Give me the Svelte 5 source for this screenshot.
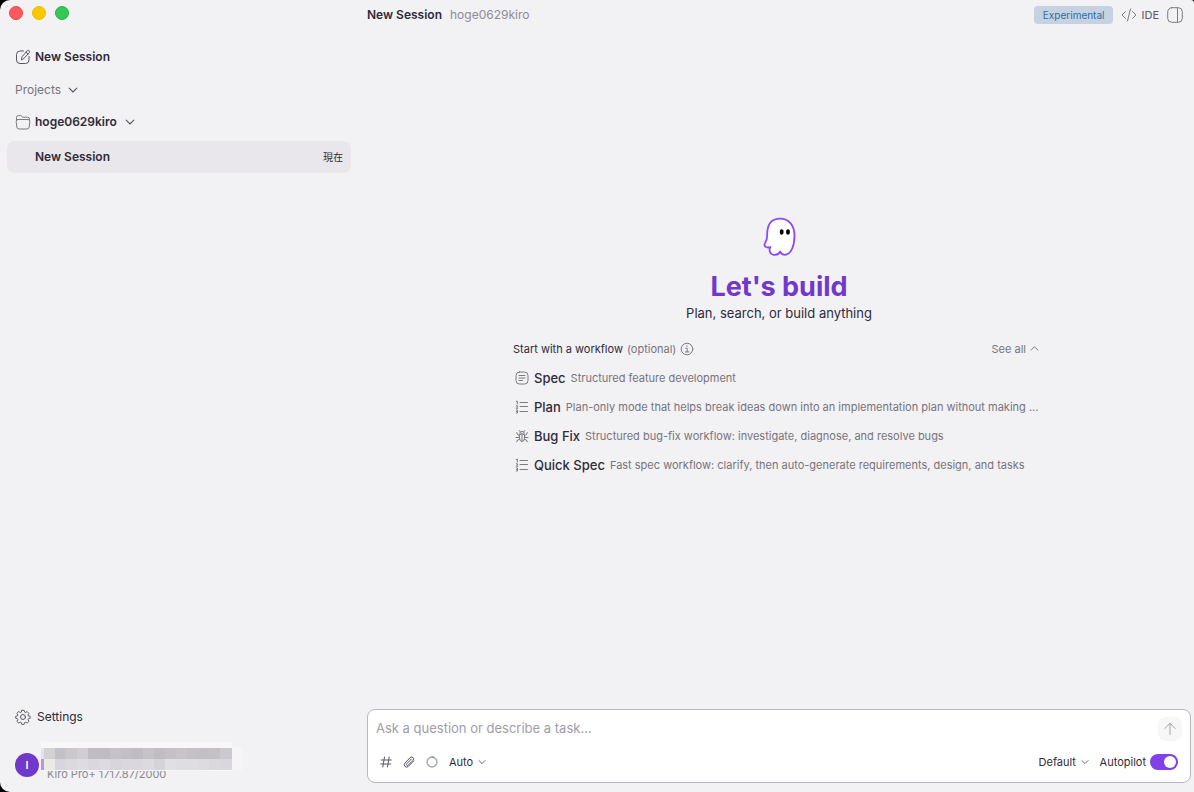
<script>
  const workflows = [
    { icon: 'spec', name: 'Spec', text: 'Structured feature development' },
    { icon: 'list', name: 'Plan', text: 'Plan-only mode that helps break ideas down into an implementation plan without making ...' },
    { icon: 'bug', name: 'Bug Fix', text: 'Structured bug-fix workflow: investigate, diagnose, and resolve bugs' },
    { icon: 'list', name: 'Quick Spec', text: 'Fast spec workflow: clarify, then auto-generate requirements, design, and tasks' }
  ];

  // redacted account name, one colour per block
  const mosaic = [
    ['#d2d2d2', '#c3c0c8', '#cac7cd', '#d0ced4', '#bfbcc4', '#bfbcc3', '#c5c2c9', '#c3bfc7', '#bfbcc4', '#c5c2c9', '#c0bdc4', '#c3c0c7', '#c7c4ca', '#c3c0c7', '#c2bfc6', '#c3c0c7', '#cbc8ce'],
    ['#e9ebe4', '#d8d6dc', '#dbd9df', '#dedce1', '#dad8de', '#dddbe1', '#d8d6dc', '#dad8dd', '#dad8de', '#dcdadf', '#d5d3da', '#e0dfe3', '#dedde1', '#dfdde2', '#dddbe0', '#dad8dd', '#d9d7dd']
  ];

  let task = $state('');
  let model = $state('Auto');
  let profile = $state('Default');
  let autopilot = $state(true);
  let showWorkflows = $state(true);
</script>

{#snippet chevron(size = 10, up = false)}
  <svg class="chevron" class:up width={size} height={size} viewBox="0 0 10 10" aria-hidden="true">
    <path d="M1.2 3.2 5 7 8.8 3.2" />
  </svg>
{/snippet}

<div class="app">
  <aside class="sidebar">
    <div class="lights">
      <button class="light red" aria-label="Close"></button>
      <button class="light yellow" aria-label="Minimize"></button>
      <button class="light green" aria-label="Zoom"></button>
    </div>

    <nav>
      <button class="row strong">
        <svg width="16" height="16" viewBox="0 0 16 16" aria-hidden="true">
          <path d="M8.5 2H5Q1.500 2 1.500 5.500V11Q1.500 14.500 5 14.500H10.500Q14 14.500 14 11V7.500" />
          <path d="M6.500 10.500 7 7.800 12.300 1.700Q13.300 .9 14.200 1.800 15.100 2.700 14.200 3.700L8.800 9.500ZM11 3.100 12.900 5" />
        </svg>
        New Session
      </button>
      <button class="row projects">Projects {@render chevron()}</button>
      <button class="row strong folder">
        <svg width="16" height="16" viewBox="0 0 16 16" aria-hidden="true">
          <path d="M1.500 6V3.500Q1.500 1.500 3.500 1.500H5.500Q6.300 1.500 6.800 2.200L7.500 3.200H12.500Q14.500 3.200 14.500 5.200V6" />
          <path d="M3 5.500H13Q15 5.500 14.800 7.500L14.200 13Q14 15 12 15H4Q2 15 1.800 13L1.200 7.500Q1 5.500 3 5.500Z" />
        </svg>
        hoge0629kiro {@render chevron()}
      </button>
      <button class="session">New Session <time>現在</time></button>
    </nav>

    <div class="bottom">
      <button class="row settings">
        <svg width="16" height="16" viewBox="0 0 16 16" aria-hidden="true">
          <path d="M6.700 1.200h2.600l.5 1.900 1 .4 1.700-1 1.900 1.900-1 1.700.4 1 1.900.4v2.100l-1.900.6-.4 1 1 1.700-1.900 1.800-1.700-.9-1 .4-.5 1.900H6.700l-.5-1.900-1-.4-1.700.9-1.900-1.800 1-1.700-.4-1-1.900-.6V7.500l1.900-.4.4-1-1-1.700 1.900-1.900 1.700 1 1-.4Z" transform="translate(.4 .2) scale(.94)" />
          <circle cx="8" cy="8" r="2.500" />
        </svg>
        Settings
      </button>
      <div class="account">
        <div class="avatar">I</div>
        <div class="who">
          <svg class="mosaic" width="202" height="29" viewBox="0 0 202 29" aria-hidden="true">
            <rect width="191" height="29" fill="#f7f7f8" />
            <rect x="191" y="5" width="11" height="23" fill="#f5f5f7" />
            <rect y="6" width="3" height="11" fill="#e5e0f2" />
            <rect y="17" width="3" height="11" fill="#b497e2" />
            {#each mosaic as line, r}
              {#each line as fill, c}
                <rect x={3 + c * 11} y={6 + r * 11} width="12" height="11" {fill} />
              {/each}
            {/each}
          </svg>
          <span class="plan">Kiro Pro+ 1717.87/2000</span>
        </div>
      </div>
    </div>
  </aside>

  <main>
    <header>
      <strong>New Session</strong>
      <span class="crumb">hoge0629kiro</span>
      <span class="badge">Experimental</span>
      <button class="ide">
        <svg width="16" height="14" viewBox="0 0 16 14" aria-hidden="true">
          <path d="M4.500 3.500 1 7l3.500 3.500M11.500 3.500 15 7l-3.500 3.500M9.500 1 6.500 13" />
        </svg>
        IDE
      </button>
      <button class="panel" aria-label="Toggle panel">
        <svg width="16" height="16" viewBox="0 0 16 16" aria-hidden="true">
          <rect x=".7" y=".7" width="14.600" height="14.600" rx="4" />
          <path d="M10.500 1V15" />
        </svg>
      </button>
    </header>

    <section class="hero">
      <svg class="ghost" width="34" height="40" viewBox="-1 0 34 40" aria-hidden="true">
        <path d="M4.300 15C5 6 9.500 1.700 17 1.700 26 1.700 31.500 8.500 31.500 18.500 31.500 28 28.500 37.800 21.500 37.800 19.500 37.800 18 36.500 17.300 34.500 15.500 37.500 12.500 38.500 9.500 37.500 6.500 36.500 6 33 7.300 30 5 31 1.300 30.500 1.500 27.500 1.700 25.700 4 24 4 20Z" />
        <ellipse cx="18.700" cy="15" rx="1.900" ry="2.800" />
        <ellipse cx="25" cy="15" rx="1.900" ry="2.800" />
      </svg>
      <h1>Let's build</h1>
      <p class="tagline">Plan, search, or build anything</p>

      <div class="workflows">
        <div class="wf-head">
          <span>Start with a workflow</span>
          <span class="muted">(optional)</span>
          <svg width="14" height="14" viewBox="0 0 14 14" aria-hidden="true">
            <circle cx="7" cy="7" r="5.800" />
            <path d="M5.700 6.200H7.200V9.800M5.400 9.900H8.800M7 3.800V4.300" />
          </svg>
          <button class="see-all" onclick={() => (showWorkflows = !showWorkflows)}>
            See all {@render chevron(9, true)}
          </button>
        </div>
        {#if showWorkflows}
          {#each workflows as w}
            <button class="wf">
              <svg width="14" height="14" viewBox="0 0 14 14" aria-hidden="true">
                {#if w.icon === 'spec'}
                  <rect x="1" y="1" width="12" height="12" rx="3.500" />
                  <path d="M4 4.500H10M4 7H10M4 9.500H7.500" />
                {:else if w.icon === 'bug'}
                  <path d="M4.500 5.500Q7 4 9.500 5.500V9Q9.500 12.500 7 12.500T4.500 9ZM7 5V12.500M5 5V4Q5 2.500 7 2.500T9 4V5M5.300 2.800 4.300 1.500M8.700 2.800 9.700 1.500M4.500 6.500 2.500 5.500 1.800 3.500M4.500 8.500H1M4.500 10.500 2.500 11 1.800 12.800M9.500 6.500 11.500 5.500 12.200 3.500M9.500 8.500H13M9.500 10.500 11.500 11 12.200 12.800" />
                {:else}
                  <path d="M5 2.500H12.500M5 6.500H12.500M5 11.500H12.500" />
                  <path d="M1.300 1.500 2.300 1V4M1.300 5.800H2.500V7L1.300 8.300H2.700M1.300 10H2.500V13H1.300M1.600 11.500H2.500" />
                {/if}
              </svg>
              <span class="wf-name">{w.name}</span>
              <span class="wf-text">{w.text}</span>
            </button>
          {/each}
        {/if}
      </div>
    </section>

    <form class="composer" onsubmit={e => e.preventDefault()}>
      <div class="line">
        <textarea rows="1" bind:value={task} placeholder="Ask a question or describe a task..." aria-label="Task"></textarea>
        <button class="send" type="submit" aria-label="Send" disabled={!task}>
          <svg width="14" height="14" viewBox="0 0 14 14" aria-hidden="true">
            <path d="M7 12.500V1.500M1.800 6.500 7 1.300 12.200 6.500" />
          </svg>
        </button>
      </div>
      <div class="line tools">
        <button type="button" aria-label="Add context">
          <svg width="12" height="12" viewBox="0 0 12 12" aria-hidden="true">
            <path d="M4.500 1 2.800 11M9.200 1 7.500 11M1.200 4H11.200M.7 8H10.700" />
          </svg>
        </button>
        <button type="button" aria-label="Attach file">
          <svg width="12" height="12" viewBox="0 0 12 12" aria-hidden="true">
            <path d="M10.800 4.800 5.400 10.400Q3.700 12 2 10.400T2 7L7.200 1.600Q8.700.4 10 1.600T10 4.300L5.200 9.200Q4.400 9.900 3.700 9.200T3.700 7.800L8.200 3.200" />
          </svg>
        </button>
        <button type="button" aria-label="Context usage">
          <svg class="usage" width="12" height="12" viewBox="0 0 12 12" aria-hidden="true">
            <circle cx="6" cy="6" r="4.900" />
            <path d="M6 1.100Q7 1.100 7.600 1.400" />
          </svg>
        </button>
        <label class="pick">
          <select bind:value={model} aria-label="Model"><option>Auto</option></select>
          {@render chevron(8)}
        </label>
        <label class="pick profile">
          <select bind:value={profile} aria-label="Profile"><option>Default</option></select>
          {@render chevron(8)}
        </label>
        <label class="autopilot">
          Autopilot
          <input type="checkbox" role="switch" bind:checked={autopilot} />
        </label>
      </div>
    </form>
  </main>
</div>

<style>
  :global(body) {
    background: #000;
  }
  .app {
    display: grid;
    grid-template-columns: 358px minmax(0, 1fr);
    min-height: 100vh;
    background: #f2f1f4;
    border-radius: 10px 3px 0 10px;
    color: #2f2b3a;
    font-family: Inter, "Noto Sans CJK JP", sans-serif;
    font-size: 12px;
    line-height: 16px;
  }
  button, select, textarea {
    margin: 0;
    padding: 0;
    border: 0;
    background: none;
    color: inherit;
    font: inherit;
    text-align: left;
  }
  svg {
    flex: none;
    fill: none;
    stroke: #7d7a82;
    stroke-linecap: round;
    stroke-linejoin: round;
  }
  .chevron { stroke: #5a5663; stroke-width: 1.1; }
  .chevron.up { transform: rotate(180deg); }

  .sidebar {
    display: flex;
    flex-direction: column;
    padding: 6px 7px 0;
  }
  .lights {
    display: flex;
    gap: 9px;
    padding-left: 2px;
  }
  .light {
    width: 14px;
    height: 14px;
    border-radius: 50%;
  }
  .red { background: #ff5a5f; border: 1px solid #f9434a; }
  .yellow { background: #fac800; border: 1px solid #efbd00; }
  .green { background: #34c759; border: 1px solid #1cb545; }

  nav {
    display: flex;
    flex-direction: column;
    padding-top: 21px;
  }
  .row {
    display: flex;
    align-items: center;
    gap: 4px;
    height: 32px;
    padding: 0 8px;
  }
  .strong, .session, header strong {
    font-size: 12px;
    font-weight: 600;
  }
  .strong svg:first-child { stroke: #5a5663; }
  .projects {
    gap: 7px;
    height: 34px;
    color: #77747c;
  }
  .folder .chevron { margin-left: 4px; }
  .strong.folder svg:first-child { stroke: #7d7a82; }
  .row.folder { height: 30px; }
  .session {
    display: flex;
    align-items: center;
    justify-content: space-between;
    height: 32px;
    margin-top: 4px;
    padding: 0 8px 0 28px;
    border-radius: 8px;
    background: #e9e7eb;
  }
  time {
    font-size: 10px;
    font-weight: 400;
  }

  .bottom {
    margin-top: auto;
    padding-bottom: 10px;
  }
  .settings { gap: 6px; }
  .settings svg { stroke: #5a5663; }
  .account {
    display: flex;
    align-items: center;
    gap: 2px;
    padding: 9px 8px 0;
  }
  .avatar {
    width: 24px;
    height: 24px;
    margin-top: 5px;
    border-radius: 50%;
    background: #7138cc;
    color: #fff;
    font-size: 11px;
    font-weight: 600;
    line-height: 24px;
    text-align: center;
  }
  .who {
    display: flex;
    flex-direction: column;
  }
  .mosaic {
    position: relative;
    stroke: none;
  }
  .plan {
    margin-top: -5px;
    padding-left: 6px;
    color: #8b8893;
    font-size: 11px;
    line-height: 16px;
  }

  main {
    display: flex;
    flex-direction: column;
    padding: 0 3px 9px 9px;
  }
  header {
    display: flex;
    align-items: center;
    height: 30px;
    padding-right: 8px;
  }
  .crumb {
    margin-left: 8px;
    color: #8f8b98;
  }
  .badge {
    margin-left: auto;
    padding: 1px 9px;
    border-radius: 4px;
    background: #c5d2e1;
    color: #2e6da8;
    font-size: 10px;
  }
  .ide {
    display: flex;
    align-items: center;
    gap: 4px;
    margin-left: 8px;
    color: #5a5663;
    font-size: 11px;
  }
  .panel {
    display: flex;
    margin-left: 8px;
  }

  .hero {
    display: flex;
    flex: 1;
    flex-direction: column;
    align-items: center;
    justify-content: center;
    padding-bottom: 43px;
  }
  .ghost path {
    fill: #fff;
    stroke: #8e47ff;
    stroke-width: 1.8;
  }
  .ghost ellipse {
    fill: #000;
    stroke: none;
  }
  h1 {
    margin: 12px 0 0;
    color: #7138cc;
    font-size: 27px;
    font-weight: 700;
    line-height: 35px;
  }
  .tagline {
    margin: 0;
    font-size: 13px;
    line-height: 18px;
  }
  .workflows {
    width: 100%;
    max-width: 532px;
    margin-top: 18px;
  }
  .wf-head {
    display: flex;
    align-items: center;
    gap: 4px;
    height: 18px;
    margin-bottom: 6px;
    font-size: 11px;
  }
  .muted, .see-all { color: #77747c; }
  .see-all {
    display: flex;
    align-items: center;
    gap: 4px;
    margin-left: auto;
    padding-right: 6px;
  }
  .see-all .chevron { stroke: #77747c; }
  .wf {
    display: flex;
    align-items: center;
    gap: 5px;
    width: 100%;
    height: 29px;
    padding: 0 2px;
  }
  .wf-name {
    font-size: 13px;
    font-weight: 500;
    white-space: nowrap;
  }
  .wf-text {
    overflow: hidden;
    color: #77747c;
    font-size: 11px;
    text-overflow: ellipsis;
    white-space: nowrap;
  }

  .composer {
    display: flex;
    flex-direction: column;
    gap: 13px;
    padding: 7px 8px 12px;
    border: 1px solid #bbb8c2;
    border-radius: 8px;
    background: #fff;
  }
  .line {
    display: flex;
    align-items: center;
  }
  textarea {
    flex: 1;
    height: 20px;
    outline: none;
    resize: none;
    font-size: 13px;
    line-height: 18px;
  }
  textarea::placeholder { color: #a09da6; }
  .send {
    display: grid;
    place-items: center;
    width: 24px;
    height: 24px;
    border-radius: 8px;
    background: #f7f7f8;
  }
  .send svg { stroke: #a5a3aa; }
  .tools {
    gap: 11px;
    padding: 0 4px;
    font-size: 11px;
  }
  .tools button { display: flex; }
  .tools svg { stroke: #5a5663; }
  .tools .usage circle {
    stroke: #aaa8ad;
    stroke-width: 1.5;
  }
  .tools .usage path { stroke: #5fae82; stroke-width: 1.5; }
  .pick {
    display: flex;
    align-items: center;
    gap: 4px;
  }
  select {
    appearance: none;
    outline: none;
  }
  .profile { margin-left: auto; }
  .autopilot {
    display: flex;
    align-items: center;
    gap: 4px;
  }
  input {
    appearance: none;
    width: 28px;
    height: 16px;
    margin: 0;
    padding: 2px;
    border-radius: 8px;
    background: #b5b2bb;
  }
  input::before {
    content: "";
    display: block;
    width: 12px;
    height: 12px;
    border-radius: 50%;
    background: #fff;
  }
  input:checked { background: #8041e6; }
  input:checked::before { margin-left: auto; }
</style>
